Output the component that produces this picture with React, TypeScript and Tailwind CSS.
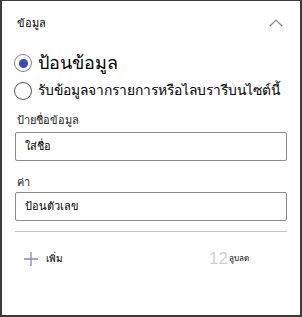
export default function App() {
    return (
        <div className="w-[302px] h-[317px] bg-white border-t border-x-2 border-b-2 border-[#3b3b3b] font-['Liberation_Serif',serif] text-black overflow-hidden">
            {/* header */}
            <div className="flex items-center justify-between pl-[15px] pr-[17px] pt-[12px] h-[32px]">
                <span className="text-[11px] leading-none">ข้อมูล</span>
                <svg width="14" height="8" viewBox="0 0 14 8" className="text-[#8a8a8a]">
                    <path d="M1 7 L7 1 L13 7" fill="none" stroke="currentColor" strokeWidth="1.2" />
                </svg>
            </div>

            {/* source choice */}
            <div className="flex flex-col pl-[12px] pt-[18px] gap-[6px]">
                <label className="flex items-center gap-[6px]">
                    <span className="shrink-0 w-[18px] h-[18px] rounded-full border-[1.5px] border-[#7a80b8] flex items-center justify-center">
                        <span className="w-[9px] h-[9px] rounded-full bg-[#3c4bb8]" />
                    </span>
                    <span className="text-[18px] leading-[24px]">ป้อนข้อมูล</span>
                </label>
                <label className="flex items-center gap-[6px]">
                    <span className="shrink-0 w-[18px] h-[18px] rounded-full border-[1.5px] border-[#555]" />
                    <span className="text-[13.8px] leading-[20px] whitespace-nowrap">รับข้อมูลจากรายการหรือไลบรารีบนไซต์นี้</span>
                </label>
            </div>

            {/* fields */}
            <div className="flex flex-col px-[13px] pt-[12px]">
                <span className="text-[11px] leading-[14px] text-[#222] pl-[2px]">ป้ายชื่อข้อมูล</span>
                <div className="mt-[5px] h-[29px] border border-[#8a8a8a] rounded-[2px] flex items-center pl-[9px] text-[11px]">
                    ใส่ชื่อ
                </div>
                <span className="mt-[14px] text-[11px] leading-[14px] text-[#222] pl-[2px]">ค่า</span>
                <div className="mt-[3px] h-[29px] border border-[#8a8a8a] rounded-[2px] flex items-center pl-[9px] text-[11px]">
                    ป้อนตัวเลข
                </div>
                <div className="mt-[10px] h-px bg-[#c4c4c4]" />
            </div>

            {/* footer */}
            <div className="flex items-center justify-between pl-[22px] pr-[51px] pt-[18px]">
                <div className="flex items-center gap-[8px]">
                    <svg width="14" height="14" viewBox="0 0 14 14" className="text-[#8088c4]">
                        <path d="M7 0 V14 M0 7 H14" stroke="currentColor" strokeWidth="1.3" />
                    </svg>
                    <span className="text-[10px] leading-none">เพิ่ม</span>
                </div>
                <div className="flex items-center gap-[1px]">
                    <span className="text-[17px] leading-none text-[#d0d0d0] font-['Liberation_Sans',sans-serif]">12</span>
                    <span className="text-[8px] leading-none">ลูบลด</span>
                </div>
            </div>
        </div>
    );
}
